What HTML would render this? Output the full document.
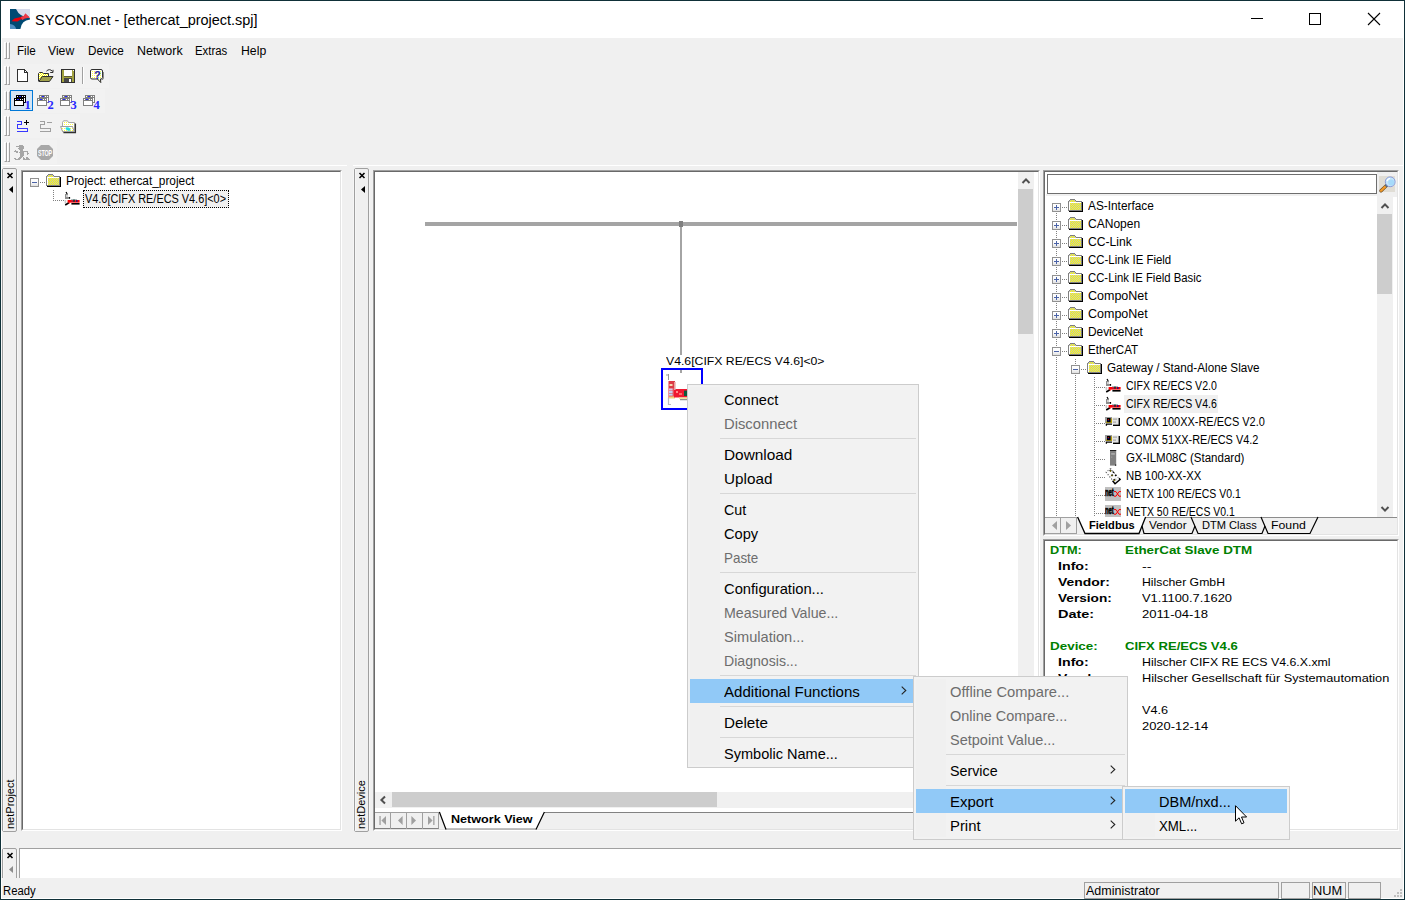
<!DOCTYPE html>
<html lang="en"><head><meta charset="utf-8"><title>SYCON.net - [ethercat_project.spj]</title>
<style>
html,body{margin:0;padding:0;}
body{width:1405px;height:900px;overflow:hidden;background:#f0f0f0;font-family:"Liberation Sans",sans-serif;}
#win{position:absolute;left:0;top:0;width:1405px;height:900px;overflow:hidden;background:#f0f0f0;}
#win div,#win span,#win svg{position:absolute;}
.t{white-space:pre;line-height:1;}
svg{overflow:visible;}
.sunk{border:1px solid;border-color:#a0a0a0 #fff #fff #a0a0a0;box-sizing:border-box;}
.sunk>i{position:absolute;left:0;top:0;right:0;bottom:0;border:1px solid;border-color:#696969 #e3e3e3 #e3e3e3 #696969;background:#fff;display:block;}
.menu{background:#f2f2f2;border:1px solid #ccc;box-sizing:border-box;}
.sep{height:1px;background:#d7d7d7;}
.hl{background:#91c9f7;}

</style></head><body>
<div id="win">
<div style="left:0px;top:0px;width:1405px;height:900px;background:#0f3038;"></div>
<div style="left:1px;top:1px;width:1403px;height:898px;background:#fff;"></div>
<div style="left:2px;top:38px;width:1401px;height:860px;background:#f0f0f0;"></div>
<div style="left:1px;top:1px;width:1403px;height:37px;background:#fff;"></div>
<svg style="left:10px;top:9px" width="20" height="20" viewBox="0 0 20 20">
<rect width="20" height="20" fill="#004a73"/>
<path d="M6 0 Q9.5 8 20 9.2 V0 Z" fill="#d6daea"/>
<path d="M20 10.6 Q11.5 11.6 10.4 20 H20 Z" fill="#fff"/>
<path d="M0 15 Q5 15.6 6.2 20 H0 Z" fill="#4f8fc2"/>
<path d="M1.5 12.2 L4.5 9.6 L11 8 L14.2 6.8 L15.3 4.6 L19.6 8.4 L14.6 9.4 L12.4 10.9 L11.6 10 L7.5 12.6 Z" fill="#e8000a"/>
<path d="M11 8 L14.2 6.8 L15.3 4.6 L19.6 8.4 L14.6 9.4 L12.4 10.9 L11.6 10 Z" fill="#ea3a48"/>
</svg>
<span class="t" id="title" style="left:35.0px;top:11.88px;font-size:15.5px;color:#000;transform-origin:0 50%;transform:scaleX(0.9328);">SYCON.net - [ethercat_project.spj]</span>
<svg style="left:1240px;top:1px" width="160" height="36" viewBox="0 0 160 36" fill="none" stroke="#000" stroke-width="1">
<path d="M11 17.5 H23"/>
<rect x="69.5" y="12.5" width="11" height="11"/>
<path d="M128 12 L140 24 M140 12 L128 24" stroke-width="1.1"/>
</svg>
<div style="left:2px;top:165px;width:1401px;height:1px;background:#fff;"></div>
<div style="left:347px;top:165px;width:6px;height:1px;background:#f0f0f0;"></div>
<span class="t" id="mb0" style="left:16.8px;top:44.84px;font-size:12px;color:#000;transform-origin:0 50%;transform:scaleX(0.9719);">File</span>
<span class="t" id="mb1" style="left:48.4px;top:44.84px;font-size:12px;color:#000;transform-origin:0 50%;transform:scaleX(1.0156);">View</span>
<span class="t" id="mb2" style="left:87.8px;top:44.84px;font-size:12px;color:#000;transform-origin:0 50%;transform:scaleX(0.9758);">Device</span>
<span class="t" id="mb3" style="left:137.0px;top:44.84px;font-size:12px;color:#000;transform-origin:0 50%;transform:scaleX(1.0360);">Network</span>
<span class="t" id="mb4" style="left:195.4px;top:44.84px;font-size:12px;color:#000;transform-origin:0 50%;transform:scaleX(0.9466);">Extras</span>
<span class="t" id="mb5" style="left:241.0px;top:44.84px;font-size:12px;color:#000;transform-origin:0 50%;transform:scaleX(1.0208);">Help</span>
<svg width="0" height="0" style="left:0;top:0"><defs>
<pattern id="dith" width="2" height="2" patternUnits="userSpaceOnUse"><rect width="2" height="2" fill="#ffff00"/><rect width="1" height="1" fill="#fff"/><rect x="1" y="1" width="1" height="1" fill="#fff"/></pattern>
<linearGradient id="pmg" x1="0" y1="0" x2="0" y2="1"><stop offset="0" stop-color="#fff"/><stop offset=".5" stop-color="#fafafa"/><stop offset="1" stop-color="#dcdcdc"/></linearGradient>
<pattern id="dith2" width="2" height="2" patternUnits="userSpaceOnUse"><rect width="2" height="2" fill="#fff"/><rect width="1" height="1" fill="#ffff40"/></pattern>
<pattern id="dith3" width="2" height="2" patternUnits="userSpaceOnUse"><rect width="2" height="2" fill="#ffff00"/><rect x="1" width="1" height="1" fill="#c0c0c0"/><rect y="1" width="1" height="1" fill="#c0c0c0"/></pattern>
</defs></svg>
<div style="left:3px;top:64px;width:106px;height:24px;background:#f2f2f2;"></div>
<div style="left:3px;top:89px;width:102px;height:24px;background:#f2f2f2;"></div>
<div style="left:3px;top:114px;width:77px;height:24px;background:#f2f2f2;"></div>
<div style="left:3px;top:140px;width:54px;height:24px;background:#f2f2f2;"></div>
<svg style="left:17px;top:69px" width="12" height="14" viewBox="0 0 12 14" shape-rendering="crispEdges">
<path d="M0.5 0.5 H7.5 L10.5 3.5 V12.5 H0.5 Z" fill="#fff" stroke="#303030"/>
<path d="M7.5 0.5 V3.5 H10.5" fill="none" stroke="#303030"/>
</svg>
<svg style="left:38px;top:68px" width="16" height="15" viewBox="0 0 16 15">
<path d="M8.4 3.2 Q11.4 0 14.6 3.4 M12.2 4.5 H15 V1.8" fill="none" stroke="#303030" stroke-width="1"/>
<path d="M0.5 13 V5.5 L1.5 4.5 H4.5 L5.5 5.5 H10.5 V8" fill="url(#dith)" stroke="#303030" stroke-width="1"/>
<path d="M1 8 V13 L4 8 Z" fill="url(#dith)"/>
<path d="M0.8 13.5 L4.2 8.5 H15 L11.4 13.5 Z" fill="#a2a24c" stroke="#303030" stroke-width="1"/>
</svg>
<svg style="left:61px;top:69px" width="15" height="15" viewBox="0 0 15 15" shape-rendering="crispEdges">
<rect x="0.5" y="0.5" width="13" height="13" fill="#a2a240" stroke="#303030"/>
<rect x="3" y="1" width="8" height="6" fill="#fff"/><rect x="3" y="7" width="8" height="1" fill="#303030" opacity=".6"/>
<rect x="3" y="9" width="8" height="4" fill="#484848"/><rect x="8" y="10" width="2" height="3" fill="#fff"/>
<rect x="12" y="1" width="1" height="1" fill="#fff"/>
</svg>
<div style="left:82px;top:67px;width:1px;height:17px;background:#a0a0a0;"></div>
<div style="left:83px;top:67px;width:1px;height:17px;background:#fff;"></div>
<svg style="left:90px;top:69px" width="15" height="15" viewBox="0 0 15 15">
<path d="M2 0.5 H11 Q12.5 0.5 12.5 2 V8.5 Q12.5 10 11 10 H10.4 L10.8 13.6 L7.4 10 H2 Q0.5 10 0.5 8.5 V2 Q0.5 0.5 2 0.5 Z" fill="url(#dith2)" stroke="#303030" stroke-width="1"/>
<path d="M13.4 3 V9 Q13.4 10.8 11.6 10.8" fill="none" stroke="#808080" stroke-width="1"/>
</svg>
<span class="t" style="left:94.2px;top:70.4px;font-size:10.5px;font-weight:bold;color:#2626a6;-webkit-text-stroke:0.2px #2626a6;">?</span>
<div style="left:10px;top:90px;width:23px;height:21px;background:#d5e5f4;border:1px solid #0078d7;box-sizing:border-box;"></div>
<svg style="left:14px;top:95px" width="17" height="15" viewBox="0 0 17 15" shape-rendering="crispEdges">
<rect x="2.5" y="0.5" width="9" height="7" fill="#fff" stroke="#000"/><rect x="3" y="1" width="8" height="2" fill="#000"/>
<rect x="5" y="1" width="2" height="1" fill="#2020ff"/><rect x="8" y="1" width="1" height="1" fill="#fff"/><rect x="10" y="1" width="1" height="1" fill="#fff"/><rect x="3" y="1" width="1" height="1" fill="#fff"/>
<rect x="0.5" y="3.5" width="9" height="7" fill="#fff" stroke="#000"/><rect x="1" y="4" width="8" height="2" fill="#000"/>
<rect x="3" y="4" width="2" height="1" fill="#2020ff"/><rect x="6" y="4" width="1" height="1" fill="#fff"/><rect x="8" y="4" width="1" height="1" fill="#fff"/><rect x="1" y="4" width="1" height="1" fill="#fff"/>
</svg><span class="t" style="left:24.6px;top:99.4px;font-size:12.5px;font-weight:bold;color:#2828ff;font-family:'Liberation Serif',serif">1</span>
<svg style="left:37px;top:95px" width="17" height="15" viewBox="0 0 17 15" shape-rendering="crispEdges">
<rect x="2.5" y="0.5" width="9" height="7" fill="#fff" stroke="#808080"/><rect x="3" y="1" width="8" height="2" fill="#808080"/>
<rect x="5" y="1" width="2" height="1" fill="#2020ff"/><rect x="8" y="1" width="1" height="1" fill="#fff"/><rect x="10" y="1" width="1" height="1" fill="#fff"/><rect x="3" y="1" width="1" height="1" fill="#fff"/>
<rect x="0.5" y="3.5" width="9" height="7" fill="#fff" stroke="#808080"/><rect x="1" y="4" width="8" height="2" fill="#808080"/>
<rect x="3" y="4" width="2" height="1" fill="#2020ff"/><rect x="6" y="4" width="1" height="1" fill="#fff"/><rect x="8" y="4" width="1" height="1" fill="#fff"/><rect x="1" y="4" width="1" height="1" fill="#fff"/>
</svg><span class="t" style="left:47.6px;top:99.4px;font-size:12.5px;font-weight:bold;color:#2828ff;font-family:'Liberation Serif',serif">2</span>
<svg style="left:60px;top:95px" width="17" height="15" viewBox="0 0 17 15" shape-rendering="crispEdges">
<rect x="2.5" y="0.5" width="9" height="7" fill="#fff" stroke="#808080"/><rect x="3" y="1" width="8" height="2" fill="#808080"/>
<rect x="5" y="1" width="2" height="1" fill="#2020ff"/><rect x="8" y="1" width="1" height="1" fill="#fff"/><rect x="10" y="1" width="1" height="1" fill="#fff"/><rect x="3" y="1" width="1" height="1" fill="#fff"/>
<rect x="0.5" y="3.5" width="9" height="7" fill="#fff" stroke="#808080"/><rect x="1" y="4" width="8" height="2" fill="#808080"/>
<rect x="3" y="4" width="2" height="1" fill="#2020ff"/><rect x="6" y="4" width="1" height="1" fill="#fff"/><rect x="8" y="4" width="1" height="1" fill="#fff"/><rect x="1" y="4" width="1" height="1" fill="#fff"/>
</svg><span class="t" style="left:70.6px;top:99.4px;font-size:12.5px;font-weight:bold;color:#2828ff;font-family:'Liberation Serif',serif">3</span>
<svg style="left:83px;top:95px" width="17" height="15" viewBox="0 0 17 15" shape-rendering="crispEdges">
<rect x="2.5" y="0.5" width="9" height="7" fill="#fff" stroke="#808080"/><rect x="3" y="1" width="8" height="2" fill="#808080"/>
<rect x="5" y="1" width="2" height="1" fill="#2020ff"/><rect x="8" y="1" width="1" height="1" fill="#fff"/><rect x="10" y="1" width="1" height="1" fill="#fff"/><rect x="3" y="1" width="1" height="1" fill="#fff"/>
<rect x="0.5" y="3.5" width="9" height="7" fill="#fff" stroke="#808080"/><rect x="1" y="4" width="8" height="2" fill="#808080"/>
<rect x="3" y="4" width="2" height="1" fill="#2020ff"/><rect x="6" y="4" width="1" height="1" fill="#fff"/><rect x="8" y="4" width="1" height="1" fill="#fff"/><rect x="1" y="4" width="1" height="1" fill="#fff"/>
</svg><span class="t" style="left:93.6px;top:99.4px;font-size:12.5px;font-weight:bold;color:#2828ff;font-family:'Liberation Serif',serif">4</span>
<svg style="left:17px;top:120px" width="14" height="13" viewBox="0 0 14 13" shape-rendering="crispEdges"><path d="M0 1.5 H4.5 V4.5 H0.5 V8.5 H10.5 V11.5 H0" fill="none" stroke="#3838ff" stroke-width="1"/></svg>
<div style="left:24px;top:122px;width:5px;height:1px;background:#000;"></div>
<div style="left:26px;top:120px;width:1px;height:5px;background:#000;"></div>
<svg style="left:40px;top:120px" width="14" height="13" viewBox="0 0 14 13" shape-rendering="crispEdges"><path d="M0 1.5 H4.5 V4.5 H0.5 V8.5 H10.5 V11.5 H0" fill="none" stroke="#a0a0a0" stroke-width="1"/></svg>
<div style="left:47px;top:122px;width:5px;height:1px;background:#a0a0a0;"></div>
<svg style="left:60px;top:120px" width="17" height="14" viewBox="0 0 17 14">
<path d="M2.5 2.5 L3.5 0.8 H7.5 L8.5 2.5 H14.5 V11.5 H2.5 Z" fill="url(#dith2)" stroke="#a8a8a8" stroke-width="1"/>
<path d="M0.6 6.5 H12.5 L14.2 11.6 H2.6 Z" fill="url(#dith2)" stroke="#a0a0a0" stroke-width="1"/>
<ellipse cx="8" cy="9" rx="2.6" ry="1.5" fill="#20e0e0" transform="rotate(20 8 9)"/>
<path d="M15.4 3.4 V12.6 H3.4" fill="none" stroke="#303030" stroke-width="1.3"/>
</svg>
<svg style="left:14px;top:145px" width="16" height="15" viewBox="0 0 16 15" shape-rendering="crispEdges" fill="#a6a6a6"><rect x="5" y="0" width="4" height="1"/><rect x="2" y="1" width="8" height="1"/><rect x="5" y="2" width="5" height="1"/><rect x="4" y="3" width="6" height="1"/><rect x="5" y="4" width="4" height="1"/><rect x="1" y="5" width="1" height="1"/><rect x="6" y="5" width="3" height="1"/><rect x="0" y="6" width="4" height="1"/><rect x="6" y="6" width="8" height="1"/><rect x="2" y="7" width="2" height="1"/><rect x="5" y="7" width="5" height="1"/><rect x="13" y="7" width="1" height="1"/><rect x="6" y="8" width="4" height="1"/><rect x="13" y="8" width="2" height="1"/><rect x="6" y="9" width="4" height="1"/><rect x="13" y="9" width="1" height="1"/><rect x="6" y="10" width="4" height="1"/><rect x="6" y="11" width="3" height="1"/><rect x="5" y="12" width="3" height="1"/><rect x="9" y="12" width="1" height="1"/><rect x="12" y="12" width="2" height="1"/><rect x="0" y="13" width="2" height="1"/><rect x="4" y="13" width="3" height="1"/><rect x="9" y="13" width="2" height="1"/><rect x="12" y="13" width="3" height="1"/><rect x="1" y="14" width="5" height="1"/><rect x="9" y="14" width="7" height="1"/></svg>
<svg style="left:37px;top:145px" width="16" height="15" viewBox="0 0 16 15"><path d="M4 0 H12 L16 4 V11 L12 15 H4 L0 11 V4 Z" fill="#a8a8a8"/></svg>
<span class="t" style="left:38.3px;top:148.1px;font-size:7px;font-weight:bold;color:#fff;letter-spacing:-0.2px;transform-origin:0 0;transform:scale(.76,1.3)">STOP</span>
<div style="left:4px;top:42px;width:3px;height:17px;border:1px solid;border-color:#fff #a0a0a0 #a0a0a0 #fff;box-sizing:border-box;"></div><div style="left:7px;top:42px;width:3px;height:17px;border:1px solid;border-color:#fff #a0a0a0 #a0a0a0 #fff;box-sizing:border-box;"></div><div style="left:4px;top:66px;width:3px;height:19px;border:1px solid;border-color:#fff #a0a0a0 #a0a0a0 #fff;box-sizing:border-box;"></div><div style="left:7px;top:66px;width:3px;height:19px;border:1px solid;border-color:#fff #a0a0a0 #a0a0a0 #fff;box-sizing:border-box;"></div><div style="left:4px;top:91px;width:3px;height:19px;border:1px solid;border-color:#fff #a0a0a0 #a0a0a0 #fff;box-sizing:border-box;"></div><div style="left:7px;top:91px;width:3px;height:19px;border:1px solid;border-color:#fff #a0a0a0 #a0a0a0 #fff;box-sizing:border-box;"></div><div style="left:4px;top:116px;width:3px;height:20px;border:1px solid;border-color:#fff #a0a0a0 #a0a0a0 #fff;box-sizing:border-box;"></div><div style="left:7px;top:116px;width:3px;height:20px;border:1px solid;border-color:#fff #a0a0a0 #a0a0a0 #fff;box-sizing:border-box;"></div><div style="left:4px;top:142px;width:3px;height:20px;border:1px solid;border-color:#fff #a0a0a0 #a0a0a0 #fff;box-sizing:border-box;"></div><div style="left:7px;top:142px;width:3px;height:20px;border:1px solid;border-color:#fff #a0a0a0 #a0a0a0 #fff;box-sizing:border-box;"></div>
<div style="left:2px;top:168px;width:15px;height:664px;border:1px solid #a0a0a0;border-radius:2px;box-sizing:border-box;"></div><div style="left:1px;top:170px;width:1px;height:660px;background:#f6f6f6;"></div><div style="left:17px;top:170px;width:1px;height:660px;background:#f6f6f6;"></div><div style="left:3px;top:169px;width:1px;height:662px;background:#f6f6f6;"></div><svg style="left:7px;top:173px" width="6" height="5" viewBox="0 0 6 5"><path d="M0.5 0 L5.5 5 M5.5 0 L0.5 5" stroke="#000" stroke-width="1.6"/></svg><svg style="left:9px;top:186px" width="4" height="7" viewBox="0 0 4 7"><path d="M4 0 L4 7 L0 3.5 Z" fill="#000"/></svg>
<div style="left:354px;top:168px;width:15px;height:664px;border:1px solid #a0a0a0;border-radius:2px;box-sizing:border-box;"></div><div style="left:353px;top:170px;width:1px;height:660px;background:#f6f6f6;"></div><div style="left:369px;top:170px;width:1px;height:660px;background:#f6f6f6;"></div><div style="left:355px;top:169px;width:1px;height:662px;background:#f6f6f6;"></div><svg style="left:359px;top:173px" width="6" height="5" viewBox="0 0 6 5"><path d="M0.5 0 L5.5 5 M5.5 0 L0.5 5" stroke="#000" stroke-width="1.6"/></svg><svg style="left:361px;top:186px" width="4" height="7" viewBox="0 0 4 7"><path d="M4 0 L4 7 L0 3.5 Z" fill="#000"/></svg>
<div style="left:0;top:848px;width:20px;height:30px;overflow:hidden"><div style="left:0;top:-848px;width:20px;height:900px"><div style="left:2px;top:848px;width:15px;height:36px;border:1px solid #a0a0a0;border-radius:2px;box-sizing:border-box;"></div><div style="left:1px;top:850px;width:1px;height:32px;background:#f6f6f6;"></div><div style="left:17px;top:850px;width:1px;height:32px;background:#f6f6f6;"></div><div style="left:3px;top:849px;width:1px;height:34px;background:#f6f6f6;"></div><svg style="left:7px;top:853px" width="6" height="5" viewBox="0 0 6 5"><path d="M0.5 0 L5.5 5 M5.5 0 L0.5 5" stroke="#000" stroke-width="1.6"/></svg><svg style="left:9px;top:866px" width="4" height="7" viewBox="0 0 4 7"><path d="M4 0 L4 7 L0 3.5 Z" fill="#8c8c8c"/></svg></div></div>
<span class="t" id="rl1" style="left:5px;top:829px;font-size:11px;transform-origin:0 0;transform:rotate(-90deg);">netProject</span>
<span class="t" id="rl2" style="left:356px;top:829px;font-size:11px;transform-origin:0 0;transform:rotate(-90deg);">netDevice</span>
<div class="sunk" style="left:21px;top:170px;width:321px;height:661px"><i></i></div>
<div class="sunk" style="left:373px;top:170px;width:667px;height:661px"><i></i></div>
<div class="sunk" style="left:1043px;top:170px;width:356px;height:366px"><i></i></div>
<div class="sunk" style="left:1043px;top:539px;width:356px;height:292px"><i></i></div>
<div style="left:19px;top:848px;width:1382px;height:30px;background:#fff;border:1px solid #a0a0a0;border-right:none;border-bottom:none;box-sizing:border-box;"></div>
<span class="t" id="ready" style="left:3.0px;top:884.84px;font-size:12px;color:#000;transform-origin:0 50%;transform:scaleX(0.9398);">Ready</span>
<div style="left:1084px;top:882px;width:195px;height:17px;border:1px solid #a0a0a0;box-sizing:border-box;"></div>
<div style="left:1281px;top:882px;width:29px;height:17px;border:1px solid #a0a0a0;box-sizing:border-box;"></div>
<div style="left:1312px;top:882px;width:34px;height:17px;border:1px solid #a0a0a0;box-sizing:border-box;"></div>
<div style="left:1348px;top:882px;width:33px;height:17px;border:1px solid #a0a0a0;box-sizing:border-box;"></div>
<span class="t" id="admin" style="left:1085.9px;top:884.84px;font-size:12px;color:#000;transform-origin:0 50%;transform:scaleX(1.0426);">Administrator</span>
<span class="t" id="num" style="left:1313.4px;top:884.84px;font-size:12px;color:#000;transform-origin:0 50%;transform:scaleX(1.0685);">NUM</span>
<div style="left:1400px;top:889px;width:2px;height:2px;background:#bfbfbf;"></div>
<div style="left:1397px;top:892px;width:2px;height:2px;background:#bfbfbf;"></div>
<div style="left:1400px;top:892px;width:2px;height:2px;background:#bfbfbf;"></div>
<div style="left:1394px;top:895px;width:2px;height:2px;background:#bfbfbf;"></div>
<div style="left:1397px;top:895px;width:2px;height:2px;background:#bfbfbf;"></div>
<div style="left:1400px;top:895px;width:2px;height:2px;background:#bfbfbf;"></div>
<svg style="left:30px;top:178px" width="9" height="9" viewBox="0 0 9 9" shape-rendering="crispEdges"><rect x="0.5" y="0.5" width="8" height="8" rx="1" fill="url(#pmg)" stroke="#919191"/><rect x="2" y="4" width="5" height="1" fill="#4b63a7"/></svg>
<div style="left:40px;top:182px;width:5px;height:1px;background:repeating-linear-gradient(90deg,#808080 0 1px,transparent 1px 2px)"></div>
<svg style="left:46px;top:174px" width="15" height="13" viewBox="0 0 15 13" shape-rendering="crispEdges">
<rect x="2" y="0" width="5" height="1" fill="#808080"/>
<rect x="1" y="1" width="1" height="1" fill="#808080"/><rect x="7" y="1" width="1" height="1" fill="#808080"/>
<rect x="2" y="1" width="5" height="1" fill="url(#dith3)"/>
<rect x="1" y="2" width="7" height="1" fill="url(#dith3)"/><rect x="8" y="2" width="6" height="1" fill="#808080"/>
<rect x="0" y="2" width="1" height="10" fill="#808080"/>
<rect x="1" y="3" width="12" height="1" fill="#fff"/><rect x="1" y="4" width="1" height="7" fill="#fff"/>
<rect x="2" y="4" width="11" height="7" fill="url(#dith3)"/>
<rect x="13" y="3" width="1" height="9" fill="#808080"/>
<rect x="0" y="11" width="14" height="1" fill="#808080"/>
<rect x="14" y="3" width="1" height="10" fill="#000"/>
<rect x="1" y="12" width="14" height="1" fill="#000"/>
</svg>
<span class="t" id="lt0" style="left:65.8px;top:174.84px;font-size:12px;color:#000;transform-origin:0 50%;transform:scaleX(0.9871);">Project: ethercat_project</span>
<div style="left:53px;top:190px;width:1px;height:11px;background:repeating-linear-gradient(180deg,#808080 0 1px,transparent 1px 2px)"></div>
<div style="left:53px;top:200px;width:11px;height:1px;background:repeating-linear-gradient(90deg,#808080 0 1px,transparent 1px 2px)"></div>
<svg style="left:64px;top:191px" width="16" height="15" viewBox="0 0 16 15">
<path d="M2 1 L3.2 3" stroke="#000" stroke-width="1.2"/>
<rect x="1" y="3" width="3" height="5" fill="#8c8c8c"/><rect x="2" y="4" width="2" height="2" fill="#cfcfcf"/>
<rect x="4.5" y="6" width="1.6" height="1.8" fill="#000"/>
<rect x="0.6" y="9" width="1.6" height="3.4" fill="#c8c8c8"/>
<rect x="3.6" y="9" width="12" height="2.6" fill="#ff0000"/>
<rect x="7" y="8.2" width="6" height="1" fill="#9fb0b0"/>
<rect x="9.2" y="8.6" width="1.6" height="2.2" fill="#0a3a3a"/><rect x="12.2" y="9" width="1.3" height="2" fill="#101090"/>
<rect x="7.6" y="9.4" width="1" height="1.6" fill="#8a1a6a"/>
<rect x="4" y="11.4" width="1.8" height="1.2" fill="#ff0000"/>
<rect x="7.4" y="12" width="8.2" height="1.6" fill="#000"/>
<path d="M1.2 14 L4.6 12" stroke="#000" stroke-width="1.6"/>
</svg>
<div style="left:83px;top:190px;width:146px;height:18px;background:#f0f0f0;border:1px dotted #000;box-sizing:border-box;"></div>
<span class="t" id="lt1" style="left:85.0px;top:192.84px;font-size:12px;color:#000;transform-origin:0 50%;transform:scaleX(0.9072);">V4.6[CIFX RE/ECS V4.6]&lt;0&gt;</span>
<div style="left:425px;top:222px;width:592px;height:4px;background:#a4a4a4;"></div>
<div style="left:680px;top:226px;width:2px;height:147px;background:#a4a4a4;"></div>
<div style="left:679px;top:221px;width:4px;height:6px;background:#7f7f7f;"></div>
<div style="left:664px;top:355px;width:164px;height:13px;background:#fff;"></div>
<span class="t" id="nvlab" style="left:666.1px;top:355.97px;font-size:11.5px;color:#000;transform-origin:0 50%;transform:scaleX(1.0642);">V4.6[CIFX RE/ECS V4.6]&lt;0&gt;</span>
<div style="left:661px;top:368px;width:42px;height:42px;border:2px solid #0000ff;box-sizing:border-box;"></div>
<div style="left:680px;top:370px;width:2px;height:3px;background:#a4a4a4;"></div>
<svg style="left:665px;top:373px" width="36" height="34" viewBox="0 0 36 34">
<path d="M1 2 H3 M3.5 1 V7" stroke="#999" stroke-width="1" fill="none"/>
<rect x="3.4" y="8" width="6.6" height="17" fill="#e4525e"/>
<rect x="4" y="8" width="6" height="7" fill="#dc3a46"/><rect x="4.5" y="11" width="3" height="2" fill="#f6d8b0"/>
<rect x="4" y="15.5" width="3.6" height="2" fill="#d9c8e8"/><rect x="4" y="18" width="3.6" height="2" fill="#c8d0f0"/><rect x="4" y="20.6" width="3.6" height="2" fill="#bcd6f2"/>
<rect x="4" y="23.5" width="6" height="2" fill="#f2d27a"/>
<path d="M9 16 H36 V24.5 H9 Z" fill="#f01830"/>
<rect x="9" y="9" width="1.6" height="8" fill="#e8a0a0"/>
<rect x="19" y="17.6" width="4" height="5.4" fill="#0f5a3c"/>
<rect x="11" y="18" width="2" height="2" fill="#ff8a8a"/><rect x="14" y="20" width="3" height="2" fill="#ff6a6a"/>
<rect x="14" y="24.5" width="22" height="1.6" fill="#f2e6a0"/><rect x="15" y="26.2" width="21" height="1" fill="#777"/>
<path d="M3.5 25 V31.5 H6" stroke="#bbb" stroke-width="1.2" fill="none"/>
</svg>
<div style="left:1018px;top:172px;width:16px;height:620px;background:#f0f0f0;"></div>
<div style="left:1018px;top:189px;width:15px;height:145px;background:#cdcdcd;"></div>
<svg style="left:1022px;top:178px" width="8" height="6" viewBox="0 0 8 6"><path d="M0.5 5 L4 1.4 L7.5 5" fill="none" stroke="#505050" stroke-width="2"/></svg>
<div style="left:375px;top:792px;width:643px;height:16px;background:#f0f0f0;"></div>
<div style="left:392px;top:792px;width:325px;height:15px;background:#cdcdcd;"></div>
<svg style="left:380px;top:796px" width="6" height="8" viewBox="0 0 6 8"><path d="M5 0.5 L1.4 4 L5 7.5" fill="none" stroke="#505050" stroke-width="2"/></svg>
<div style="left:1018px;top:792px;width:16px;height:16px;background:#f0f0f0;"></div>
<div style="left:375px;top:812px;width:663px;height:17px;background:#f0f0f0;"></div>
<div style="left:544px;top:812px;width:494px;height:1px;background:#828282;"></div>
<div style="left:375px;top:812px;width:64px;height:17px;background:#f0f0f0;border:1px solid #a0a0a0;border-left:none;border-bottom-color:#808080;box-sizing:border-box;"></div>
<div style="left:390px;top:812px;width:1px;height:17px;background:#a0a0a0;"></div>
<div style="left:406px;top:812px;width:1px;height:17px;background:#a0a0a0;"></div>
<div style="left:422px;top:812px;width:1px;height:17px;background:#a0a0a0;"></div>
<svg style="left:375px;top:812px" width="64" height="17" viewBox="0 0 64 17" fill="#a0a0a0">
<rect x="4.4" y="4" width="1.3" height="9"/><path d="M11 4 V13 L6.4 8.5Z"/>
<path d="M27.6 4 V13 L23 8.5Z"/>
<path d="M36.4 4 V13 L41 8.5Z"/>
<path d="M53 4 V13 L57.6 8.5Z"/><rect x="58.2" y="4" width="1.3" height="9"/>
</svg>
<svg style="left:439px;top:812px" width="110" height="19" viewBox="0 0 110 19">
<path d="M0.4 0 L7 17.5 H97 L105.4 0 Z" fill="#fff"/>
<path d="M7 17 H97" fill="none" stroke="#808080" stroke-width="1"/>
<path d="M0.4 0 L7 17.5 M97 17.5 L105.4 0" fill="none" stroke="#000" stroke-width="1.2"/>
</svg>
<span class="t" id="nvtab" style="left:451.0px;top:814.07px;font-size:11.5px;color:#000;font-weight:bold;transform-origin:0 50%;transform:scaleX(1.0942);">Network View</span>
<div style="left:1377px;top:172px;width:20px;height:25px;background:#f0f0f0;"></div>
<div style="left:1046px;top:194px;width:351px;height:2px;background:#f0f0f0;"></div>
<div style="left:1047px;top:174px;width:330px;height:20px;background:#fff;border:1px solid #6e6e6e;box-sizing:border-box;"></div>
<div style="left:1379px;top:176px;width:16px;height:16px;background:#e0ddd5;"></div>
<svg style="left:1378.5px;top:175.5px" width="17" height="17" viewBox="0 0 17 17">
<path d="M2 14.8 L7.4 9.6" stroke="#6a4a20" stroke-width="3.4" stroke-linecap="round"/>
<path d="M2 14.8 L6.6 10.4" stroke="#f39a28" stroke-width="2.2" stroke-linecap="round"/>
<path d="M6.6 10.4 L8 9" stroke="#4a6a8a" stroke-width="2.2"/>
<circle cx="11.2" cy="5.8" r="4.9" fill="#c4e6fb" stroke="#8a9ad8" stroke-width="1"/>
<circle cx="12.2" cy="6.6" r="3" fill="#a6dafa"/>
<path d="M8 5 A3.6 3.6 0 0 1 11 2.4" stroke="#fff" stroke-width="1.4" fill="none"/>
</svg>
<div style="left:1045px;top:197px;width:352px;height:320px;overflow:hidden">
<div style="left:-1045px;top:-197px;width:1405px;height:900px">
<div style="left:1056px;top:213px;width:1px;height:305px;background:repeating-linear-gradient(180deg,#808080 0 1px,transparent 1px 2px)"></div>
<div style="left:1075px;top:359px;width:1px;height:159px;background:repeating-linear-gradient(180deg,#808080 0 1px,transparent 1px 2px)"></div>
<div style="left:1094px;top:377px;width:1px;height:141px;background:repeating-linear-gradient(180deg,#808080 0 1px,transparent 1px 2px)"></div>
<svg style="left:1052px;top:203px" width="9" height="9" viewBox="0 0 9 9" shape-rendering="crispEdges"><rect x="0.5" y="0.5" width="8" height="8" rx="1" fill="url(#pmg)" stroke="#919191"/><rect x="2" y="4" width="5" height="1" fill="#4b63a7"/><rect x="4" y="2" width="1" height="5" fill="#4b63a7"/></svg>
<div style="left:1062px;top:207px;width:5px;height:1px;background:repeating-linear-gradient(90deg,#808080 0 1px,transparent 1px 2px)"></div>
<svg style="left:1068px;top:199px" width="15" height="13" viewBox="0 0 15 13" shape-rendering="crispEdges">
<rect x="2" y="0" width="5" height="1" fill="#808080"/>
<rect x="1" y="1" width="1" height="1" fill="#808080"/><rect x="7" y="1" width="1" height="1" fill="#808080"/>
<rect x="2" y="1" width="5" height="1" fill="url(#dith3)"/>
<rect x="1" y="2" width="7" height="1" fill="url(#dith3)"/><rect x="8" y="2" width="6" height="1" fill="#808080"/>
<rect x="0" y="2" width="1" height="10" fill="#808080"/>
<rect x="1" y="3" width="12" height="1" fill="#fff"/><rect x="1" y="4" width="1" height="7" fill="#fff"/>
<rect x="2" y="4" width="11" height="7" fill="url(#dith3)"/>
<rect x="13" y="3" width="1" height="9" fill="#808080"/>
<rect x="0" y="11" width="14" height="1" fill="#808080"/>
<rect x="14" y="3" width="1" height="10" fill="#000"/>
<rect x="1" y="12" width="14" height="1" fill="#000"/>
</svg>
<span class="t" id="rt0" style="left:1087.8px;top:199.84px;font-size:12px;color:#000;transform-origin:0 50%;transform:scaleX(0.9865);">AS-Interface</span>
<svg style="left:1052px;top:221px" width="9" height="9" viewBox="0 0 9 9" shape-rendering="crispEdges"><rect x="0.5" y="0.5" width="8" height="8" rx="1" fill="url(#pmg)" stroke="#919191"/><rect x="2" y="4" width="5" height="1" fill="#4b63a7"/><rect x="4" y="2" width="1" height="5" fill="#4b63a7"/></svg>
<div style="left:1062px;top:225px;width:5px;height:1px;background:repeating-linear-gradient(90deg,#808080 0 1px,transparent 1px 2px)"></div>
<svg style="left:1068px;top:217px" width="15" height="13" viewBox="0 0 15 13" shape-rendering="crispEdges">
<rect x="2" y="0" width="5" height="1" fill="#808080"/>
<rect x="1" y="1" width="1" height="1" fill="#808080"/><rect x="7" y="1" width="1" height="1" fill="#808080"/>
<rect x="2" y="1" width="5" height="1" fill="url(#dith3)"/>
<rect x="1" y="2" width="7" height="1" fill="url(#dith3)"/><rect x="8" y="2" width="6" height="1" fill="#808080"/>
<rect x="0" y="2" width="1" height="10" fill="#808080"/>
<rect x="1" y="3" width="12" height="1" fill="#fff"/><rect x="1" y="4" width="1" height="7" fill="#fff"/>
<rect x="2" y="4" width="11" height="7" fill="url(#dith3)"/>
<rect x="13" y="3" width="1" height="9" fill="#808080"/>
<rect x="0" y="11" width="14" height="1" fill="#808080"/>
<rect x="14" y="3" width="1" height="10" fill="#000"/>
<rect x="1" y="12" width="14" height="1" fill="#000"/>
</svg>
<span class="t" id="rt1" style="left:1087.8px;top:217.84px;font-size:12px;color:#000;transform-origin:0 50%;transform:scaleX(1.0032);">CANopen</span>
<svg style="left:1052px;top:239px" width="9" height="9" viewBox="0 0 9 9" shape-rendering="crispEdges"><rect x="0.5" y="0.5" width="8" height="8" rx="1" fill="url(#pmg)" stroke="#919191"/><rect x="2" y="4" width="5" height="1" fill="#4b63a7"/><rect x="4" y="2" width="1" height="5" fill="#4b63a7"/></svg>
<div style="left:1062px;top:243px;width:5px;height:1px;background:repeating-linear-gradient(90deg,#808080 0 1px,transparent 1px 2px)"></div>
<svg style="left:1068px;top:235px" width="15" height="13" viewBox="0 0 15 13" shape-rendering="crispEdges">
<rect x="2" y="0" width="5" height="1" fill="#808080"/>
<rect x="1" y="1" width="1" height="1" fill="#808080"/><rect x="7" y="1" width="1" height="1" fill="#808080"/>
<rect x="2" y="1" width="5" height="1" fill="url(#dith3)"/>
<rect x="1" y="2" width="7" height="1" fill="url(#dith3)"/><rect x="8" y="2" width="6" height="1" fill="#808080"/>
<rect x="0" y="2" width="1" height="10" fill="#808080"/>
<rect x="1" y="3" width="12" height="1" fill="#fff"/><rect x="1" y="4" width="1" height="7" fill="#fff"/>
<rect x="2" y="4" width="11" height="7" fill="url(#dith3)"/>
<rect x="13" y="3" width="1" height="9" fill="#808080"/>
<rect x="0" y="11" width="14" height="1" fill="#808080"/>
<rect x="14" y="3" width="1" height="10" fill="#000"/>
<rect x="1" y="12" width="14" height="1" fill="#000"/>
</svg>
<span class="t" id="rt2" style="left:1087.8px;top:235.84px;font-size:12px;color:#000;transform-origin:0 50%;transform:scaleX(1.0105);">CC-Link</span>
<svg style="left:1052px;top:257px" width="9" height="9" viewBox="0 0 9 9" shape-rendering="crispEdges"><rect x="0.5" y="0.5" width="8" height="8" rx="1" fill="url(#pmg)" stroke="#919191"/><rect x="2" y="4" width="5" height="1" fill="#4b63a7"/><rect x="4" y="2" width="1" height="5" fill="#4b63a7"/></svg>
<div style="left:1062px;top:261px;width:5px;height:1px;background:repeating-linear-gradient(90deg,#808080 0 1px,transparent 1px 2px)"></div>
<svg style="left:1068px;top:253px" width="15" height="13" viewBox="0 0 15 13" shape-rendering="crispEdges">
<rect x="2" y="0" width="5" height="1" fill="#808080"/>
<rect x="1" y="1" width="1" height="1" fill="#808080"/><rect x="7" y="1" width="1" height="1" fill="#808080"/>
<rect x="2" y="1" width="5" height="1" fill="url(#dith3)"/>
<rect x="1" y="2" width="7" height="1" fill="url(#dith3)"/><rect x="8" y="2" width="6" height="1" fill="#808080"/>
<rect x="0" y="2" width="1" height="10" fill="#808080"/>
<rect x="1" y="3" width="12" height="1" fill="#fff"/><rect x="1" y="4" width="1" height="7" fill="#fff"/>
<rect x="2" y="4" width="11" height="7" fill="url(#dith3)"/>
<rect x="13" y="3" width="1" height="9" fill="#808080"/>
<rect x="0" y="11" width="14" height="1" fill="#808080"/>
<rect x="14" y="3" width="1" height="10" fill="#000"/>
<rect x="1" y="12" width="14" height="1" fill="#000"/>
</svg>
<span class="t" id="rt3" style="left:1087.8px;top:253.84px;font-size:12px;color:#000;transform-origin:0 50%;transform:scaleX(0.9524);">CC-Link IE Field</span>
<svg style="left:1052px;top:275px" width="9" height="9" viewBox="0 0 9 9" shape-rendering="crispEdges"><rect x="0.5" y="0.5" width="8" height="8" rx="1" fill="url(#pmg)" stroke="#919191"/><rect x="2" y="4" width="5" height="1" fill="#4b63a7"/><rect x="4" y="2" width="1" height="5" fill="#4b63a7"/></svg>
<div style="left:1062px;top:279px;width:5px;height:1px;background:repeating-linear-gradient(90deg,#808080 0 1px,transparent 1px 2px)"></div>
<svg style="left:1068px;top:271px" width="15" height="13" viewBox="0 0 15 13" shape-rendering="crispEdges">
<rect x="2" y="0" width="5" height="1" fill="#808080"/>
<rect x="1" y="1" width="1" height="1" fill="#808080"/><rect x="7" y="1" width="1" height="1" fill="#808080"/>
<rect x="2" y="1" width="5" height="1" fill="url(#dith3)"/>
<rect x="1" y="2" width="7" height="1" fill="url(#dith3)"/><rect x="8" y="2" width="6" height="1" fill="#808080"/>
<rect x="0" y="2" width="1" height="10" fill="#808080"/>
<rect x="1" y="3" width="12" height="1" fill="#fff"/><rect x="1" y="4" width="1" height="7" fill="#fff"/>
<rect x="2" y="4" width="11" height="7" fill="url(#dith3)"/>
<rect x="13" y="3" width="1" height="9" fill="#808080"/>
<rect x="0" y="11" width="14" height="1" fill="#808080"/>
<rect x="14" y="3" width="1" height="10" fill="#000"/>
<rect x="1" y="12" width="14" height="1" fill="#000"/>
</svg>
<span class="t" id="rt4" style="left:1087.8px;top:271.84px;font-size:12px;color:#000;transform-origin:0 50%;transform:scaleX(0.9446);">CC-Link IE Field Basic</span>
<svg style="left:1052px;top:293px" width="9" height="9" viewBox="0 0 9 9" shape-rendering="crispEdges"><rect x="0.5" y="0.5" width="8" height="8" rx="1" fill="url(#pmg)" stroke="#919191"/><rect x="2" y="4" width="5" height="1" fill="#4b63a7"/><rect x="4" y="2" width="1" height="5" fill="#4b63a7"/></svg>
<div style="left:1062px;top:297px;width:5px;height:1px;background:repeating-linear-gradient(90deg,#808080 0 1px,transparent 1px 2px)"></div>
<svg style="left:1068px;top:289px" width="15" height="13" viewBox="0 0 15 13" shape-rendering="crispEdges">
<rect x="2" y="0" width="5" height="1" fill="#808080"/>
<rect x="1" y="1" width="1" height="1" fill="#808080"/><rect x="7" y="1" width="1" height="1" fill="#808080"/>
<rect x="2" y="1" width="5" height="1" fill="url(#dith3)"/>
<rect x="1" y="2" width="7" height="1" fill="url(#dith3)"/><rect x="8" y="2" width="6" height="1" fill="#808080"/>
<rect x="0" y="2" width="1" height="10" fill="#808080"/>
<rect x="1" y="3" width="12" height="1" fill="#fff"/><rect x="1" y="4" width="1" height="7" fill="#fff"/>
<rect x="2" y="4" width="11" height="7" fill="url(#dith3)"/>
<rect x="13" y="3" width="1" height="9" fill="#808080"/>
<rect x="0" y="11" width="14" height="1" fill="#808080"/>
<rect x="14" y="3" width="1" height="10" fill="#000"/>
<rect x="1" y="12" width="14" height="1" fill="#000"/>
</svg>
<span class="t" id="rt5" style="left:1087.8px;top:289.84px;font-size:12px;color:#000;transform-origin:0 50%;transform:scaleX(1.0425);">CompoNet</span>
<svg style="left:1052px;top:311px" width="9" height="9" viewBox="0 0 9 9" shape-rendering="crispEdges"><rect x="0.5" y="0.5" width="8" height="8" rx="1" fill="url(#pmg)" stroke="#919191"/><rect x="2" y="4" width="5" height="1" fill="#4b63a7"/><rect x="4" y="2" width="1" height="5" fill="#4b63a7"/></svg>
<div style="left:1062px;top:315px;width:5px;height:1px;background:repeating-linear-gradient(90deg,#808080 0 1px,transparent 1px 2px)"></div>
<svg style="left:1068px;top:307px" width="15" height="13" viewBox="0 0 15 13" shape-rendering="crispEdges">
<rect x="2" y="0" width="5" height="1" fill="#808080"/>
<rect x="1" y="1" width="1" height="1" fill="#808080"/><rect x="7" y="1" width="1" height="1" fill="#808080"/>
<rect x="2" y="1" width="5" height="1" fill="url(#dith3)"/>
<rect x="1" y="2" width="7" height="1" fill="url(#dith3)"/><rect x="8" y="2" width="6" height="1" fill="#808080"/>
<rect x="0" y="2" width="1" height="10" fill="#808080"/>
<rect x="1" y="3" width="12" height="1" fill="#fff"/><rect x="1" y="4" width="1" height="7" fill="#fff"/>
<rect x="2" y="4" width="11" height="7" fill="url(#dith3)"/>
<rect x="13" y="3" width="1" height="9" fill="#808080"/>
<rect x="0" y="11" width="14" height="1" fill="#808080"/>
<rect x="14" y="3" width="1" height="10" fill="#000"/>
<rect x="1" y="12" width="14" height="1" fill="#000"/>
</svg>
<span class="t" id="rt6" style="left:1087.8px;top:307.84px;font-size:12px;color:#000;transform-origin:0 50%;transform:scaleX(1.0425);">CompoNet</span>
<svg style="left:1052px;top:329px" width="9" height="9" viewBox="0 0 9 9" shape-rendering="crispEdges"><rect x="0.5" y="0.5" width="8" height="8" rx="1" fill="url(#pmg)" stroke="#919191"/><rect x="2" y="4" width="5" height="1" fill="#4b63a7"/><rect x="4" y="2" width="1" height="5" fill="#4b63a7"/></svg>
<div style="left:1062px;top:333px;width:5px;height:1px;background:repeating-linear-gradient(90deg,#808080 0 1px,transparent 1px 2px)"></div>
<svg style="left:1068px;top:325px" width="15" height="13" viewBox="0 0 15 13" shape-rendering="crispEdges">
<rect x="2" y="0" width="5" height="1" fill="#808080"/>
<rect x="1" y="1" width="1" height="1" fill="#808080"/><rect x="7" y="1" width="1" height="1" fill="#808080"/>
<rect x="2" y="1" width="5" height="1" fill="url(#dith3)"/>
<rect x="1" y="2" width="7" height="1" fill="url(#dith3)"/><rect x="8" y="2" width="6" height="1" fill="#808080"/>
<rect x="0" y="2" width="1" height="10" fill="#808080"/>
<rect x="1" y="3" width="12" height="1" fill="#fff"/><rect x="1" y="4" width="1" height="7" fill="#fff"/>
<rect x="2" y="4" width="11" height="7" fill="url(#dith3)"/>
<rect x="13" y="3" width="1" height="9" fill="#808080"/>
<rect x="0" y="11" width="14" height="1" fill="#808080"/>
<rect x="14" y="3" width="1" height="10" fill="#000"/>
<rect x="1" y="12" width="14" height="1" fill="#000"/>
</svg>
<span class="t" id="rt7" style="left:1087.8px;top:325.84px;font-size:12px;color:#000;transform-origin:0 50%;transform:scaleX(0.9899);">DeviceNet</span>
<svg style="left:1052px;top:347px" width="9" height="9" viewBox="0 0 9 9" shape-rendering="crispEdges"><rect x="0.5" y="0.5" width="8" height="8" rx="1" fill="url(#pmg)" stroke="#919191"/><rect x="2" y="4" width="5" height="1" fill="#4b63a7"/></svg>
<div style="left:1062px;top:351px;width:5px;height:1px;background:repeating-linear-gradient(90deg,#808080 0 1px,transparent 1px 2px)"></div>
<svg style="left:1068px;top:343px" width="15" height="13" viewBox="0 0 15 13" shape-rendering="crispEdges">
<rect x="2" y="0" width="5" height="1" fill="#808080"/>
<rect x="1" y="1" width="1" height="1" fill="#808080"/><rect x="7" y="1" width="1" height="1" fill="#808080"/>
<rect x="2" y="1" width="5" height="1" fill="url(#dith3)"/>
<rect x="1" y="2" width="7" height="1" fill="url(#dith3)"/><rect x="8" y="2" width="6" height="1" fill="#808080"/>
<rect x="0" y="2" width="1" height="10" fill="#808080"/>
<rect x="1" y="3" width="12" height="1" fill="#fff"/><rect x="1" y="4" width="1" height="7" fill="#fff"/>
<rect x="2" y="4" width="11" height="7" fill="url(#dith3)"/>
<rect x="13" y="3" width="1" height="9" fill="#808080"/>
<rect x="0" y="11" width="14" height="1" fill="#808080"/>
<rect x="14" y="3" width="1" height="10" fill="#000"/>
<rect x="1" y="12" width="14" height="1" fill="#000"/>
</svg>
<span class="t" id="rt8" style="left:1087.8px;top:343.84px;font-size:12px;color:#000;transform-origin:0 50%;transform:scaleX(0.9692);">EtherCAT</span>
<svg style="left:1071px;top:365px" width="9" height="9" viewBox="0 0 9 9" shape-rendering="crispEdges"><rect x="0.5" y="0.5" width="8" height="8" rx="1" fill="url(#pmg)" stroke="#919191"/><rect x="2" y="4" width="5" height="1" fill="#4b63a7"/></svg>
<div style="left:1081px;top:369px;width:5px;height:1px;background:repeating-linear-gradient(90deg,#808080 0 1px,transparent 1px 2px)"></div>
<svg style="left:1087px;top:361px" width="15" height="13" viewBox="0 0 15 13" shape-rendering="crispEdges">
<rect x="2" y="0" width="5" height="1" fill="#808080"/>
<rect x="1" y="1" width="1" height="1" fill="#808080"/><rect x="7" y="1" width="1" height="1" fill="#808080"/>
<rect x="2" y="1" width="5" height="1" fill="url(#dith3)"/>
<rect x="1" y="2" width="7" height="1" fill="url(#dith3)"/><rect x="8" y="2" width="6" height="1" fill="#808080"/>
<rect x="0" y="2" width="1" height="10" fill="#808080"/>
<rect x="1" y="3" width="12" height="1" fill="#fff"/><rect x="1" y="4" width="1" height="7" fill="#fff"/>
<rect x="2" y="4" width="11" height="7" fill="url(#dith3)"/>
<rect x="13" y="3" width="1" height="9" fill="#808080"/>
<rect x="0" y="11" width="14" height="1" fill="#808080"/>
<rect x="14" y="3" width="1" height="10" fill="#000"/>
<rect x="1" y="12" width="14" height="1" fill="#000"/>
</svg>
<span class="t" id="rt9" style="left:1107.0px;top:361.84px;font-size:12px;color:#000;transform-origin:0 50%;transform:scaleX(0.9734);">Gateway / Stand-Alone Slave</span>
<div style="left:1096px;top:387px;width:9px;height:1px;background:repeating-linear-gradient(90deg,#808080 0 1px,transparent 1px 2px)"></div>
<svg style="left:1105px;top:378px" width="16" height="15" viewBox="0 0 16 15">
<path d="M2 1 L3.2 3" stroke="#000" stroke-width="1.2"/>
<rect x="1" y="3" width="3" height="5" fill="#8c8c8c"/><rect x="2" y="4" width="2" height="2" fill="#cfcfcf"/>
<rect x="4.5" y="6" width="1.6" height="1.8" fill="#000"/>
<rect x="0.6" y="9" width="1.6" height="3.4" fill="#c8c8c8"/>
<rect x="3.6" y="9" width="12" height="2.6" fill="#ff0000"/>
<rect x="7" y="8.2" width="6" height="1" fill="#9fb0b0"/>
<rect x="9.2" y="8.6" width="1.6" height="2.2" fill="#0a3a3a"/><rect x="12.2" y="9" width="1.3" height="2" fill="#101090"/>
<rect x="7.6" y="9.4" width="1" height="1.6" fill="#8a1a6a"/>
<rect x="4" y="11.4" width="1.8" height="1.2" fill="#ff0000"/>
<rect x="7.4" y="12" width="8.2" height="1.6" fill="#000"/>
<path d="M1.2 14 L4.6 12" stroke="#000" stroke-width="1.6"/>
</svg>
<span class="t" id="rt10" style="left:1125.8px;top:379.84px;font-size:12px;color:#000;transform-origin:0 50%;transform:scaleX(0.8784);">CIFX RE/ECS V2.0</span>
<div style="left:1096px;top:405px;width:9px;height:1px;background:repeating-linear-gradient(90deg,#808080 0 1px,transparent 1px 2px)"></div>
<svg style="left:1105px;top:396px" width="16" height="15" viewBox="0 0 16 15">
<path d="M2 1 L3.2 3" stroke="#000" stroke-width="1.2"/>
<rect x="1" y="3" width="3" height="5" fill="#8c8c8c"/><rect x="2" y="4" width="2" height="2" fill="#cfcfcf"/>
<rect x="4.5" y="6" width="1.6" height="1.8" fill="#000"/>
<rect x="0.6" y="9" width="1.6" height="3.4" fill="#c8c8c8"/>
<rect x="3.6" y="9" width="12" height="2.6" fill="#ff0000"/>
<rect x="7" y="8.2" width="6" height="1" fill="#9fb0b0"/>
<rect x="9.2" y="8.6" width="1.6" height="2.2" fill="#0a3a3a"/><rect x="12.2" y="9" width="1.3" height="2" fill="#101090"/>
<rect x="7.6" y="9.4" width="1" height="1.6" fill="#8a1a6a"/>
<rect x="4" y="11.4" width="1.8" height="1.2" fill="#ff0000"/>
<rect x="7.4" y="12" width="8.2" height="1.6" fill="#000"/>
<path d="M1.2 14 L4.6 12" stroke="#000" stroke-width="1.6"/>
</svg>
<div style="left:1124px;top:395px;width:94px;height:18px;background:#f0f0f0;"></div>
<span class="t" id="rt11" style="left:1125.8px;top:397.84px;font-size:12px;color:#000;transform-origin:0 50%;transform:scaleX(0.8784);">CIFX RE/ECS V4.6</span>
<div style="left:1096px;top:423px;width:9px;height:1px;background:repeating-linear-gradient(90deg,#808080 0 1px,transparent 1px 2px)"></div>
<svg style="left:1105px;top:417px" width="16" height="10" viewBox="0 0 16 10">
<rect x="0" y="0" width="7" height="6" fill="#9a9a9a"/>
<rect x="1" y="4.5" width="6" height="1.3" fill="#b8a000"/><rect x="6" y="1.5" width="1.2" height="4" fill="#b8a000"/>
<rect x="2" y="1" width="3.6" height="4.2" fill="#000"/>
<rect x="2.8" y="2" width="1" height="1" fill="#e00000"/><rect x="2.8" y="3.2" width="1" height="1" fill="#0000c0"/>
<rect x="7.4" y="0.5" width="7" height="7" fill="#e4e4e4"/>
<rect x="8" y="1.6" width="4" height="1" fill="#9c9c9c"/><rect x="8" y="4.6" width="3" height="1" fill="#9c9c9c"/>
<rect x="13.6" y="1" width="1.4" height="8" fill="#000"/>
<rect x="8" y="7.6" width="7" height="1.4" fill="#000"/>
<path d="M1.4 8.8 V7.2 H7" fill="none" stroke="#000" stroke-width="1.3"/>
</svg>
<span class="t" id="rt12" style="left:1125.8px;top:415.84px;font-size:12px;color:#000;transform-origin:0 50%;transform:scaleX(0.9128);">COMX 100XX-RE/ECS V2.0</span>
<div style="left:1096px;top:441px;width:9px;height:1px;background:repeating-linear-gradient(90deg,#808080 0 1px,transparent 1px 2px)"></div>
<svg style="left:1105px;top:435px" width="16" height="10" viewBox="0 0 16 10">
<rect x="0" y="0" width="7" height="6" fill="#9a9a9a"/>
<rect x="1" y="4.5" width="6" height="1.3" fill="#b8a000"/><rect x="6" y="1.5" width="1.2" height="4" fill="#b8a000"/>
<rect x="2" y="1" width="3.6" height="4.2" fill="#000"/>
<rect x="2.8" y="2" width="1" height="1" fill="#e00000"/><rect x="2.8" y="3.2" width="1" height="1" fill="#0000c0"/>
<rect x="7.4" y="0.5" width="7" height="7" fill="#e4e4e4"/>
<rect x="8" y="1.6" width="4" height="1" fill="#9c9c9c"/><rect x="8" y="4.6" width="3" height="1" fill="#9c9c9c"/>
<rect x="13.6" y="1" width="1.4" height="8" fill="#000"/>
<rect x="8" y="7.6" width="7" height="1.4" fill="#000"/>
<path d="M1.4 8.8 V7.2 H7" fill="none" stroke="#000" stroke-width="1.3"/>
</svg>
<span class="t" id="rt13" style="left:1125.8px;top:433.84px;font-size:12px;color:#000;transform-origin:0 50%;transform:scaleX(0.9107);">COMX 51XX-RE/ECS V4.2</span>
<div style="left:1096px;top:459px;width:9px;height:1px;background:repeating-linear-gradient(90deg,#808080 0 1px,transparent 1px 2px)"></div>
<svg style="left:1110px;top:450px" width="7" height="16" viewBox="0 0 7 16">
<rect x="0" y="0" width="6.2" height="15.6" fill="#808080"/>
<rect x="0" y="0" width="6.2" height="1" fill="#202020"/>
<rect x="1.2" y="3" width="3.6" height="1.8" fill="#a8a8a8"/><rect x="1.2" y="6.6" width="1" height="1" fill="#a8a8a8"/>
<rect x="5" y="14.6" width="1.2" height="1" fill="#000"/>
</svg>
<span class="t" id="rt14" style="left:1125.8px;top:451.84px;font-size:12px;color:#000;transform-origin:0 50%;transform:scaleX(0.9596);">GX-ILM08C (Standard)</span>
<div style="left:1096px;top:477px;width:9px;height:1px;background:repeating-linear-gradient(90deg,#808080 0 1px,transparent 1px 2px)"></div>
<svg style="left:1105px;top:468px" width="16" height="16" viewBox="0 0 16 16">
<g transform="rotate(50 8 8)">
<rect x="0.6" y="5" width="14" height="6" fill="#fbfbfb"/>
<path d="M0.6 11 H11" stroke="#303030" stroke-width="1" stroke-dasharray="1 1.8" fill="none"/>
<path d="M0.6 5 H13.4" stroke="#606060" stroke-width="1" stroke-dasharray="1 1.8" fill="none"/><path d="M0.6 5 V11" stroke="#606060" stroke-width="1" stroke-dasharray="1 1.8" fill="none"/>
<path d="M11.4 11.4 H15.2 V4.8 H13.6" fill="none" stroke="#000" stroke-width="1.5"/>
<rect x="11" y="7" width="2.6" height="2.4" fill="#dcdcdc"/>
<rect x="1.4" y="5.6" width="1.8" height="1.8" fill="#000"/><rect x="6" y="7.4" width="1.8" height="1.8" fill="#000"/><rect x="11" y="8.6" width="1.8" height="1.8" fill="#000"/><rect x="4.6" y="4.6" width="1.6" height="1.4" fill="#000"/><rect x="8.4" y="4.8" width="1.6" height="1.4" fill="#000"/>
<rect x="2" y="6.2" width="1" height="1" fill="#c8b400"/><rect x="6.6" y="8" width="1" height="1" fill="#c8b400"/><rect x="11.6" y="9.2" width="1" height="1" fill="#c8b400"/>
</g></svg>
<span class="t" id="rt15" style="left:1125.8px;top:469.84px;font-size:12px;color:#000;transform-origin:0 50%;transform:scaleX(0.9419);">NB 100-XX-XX</span>
<div style="left:1096px;top:495px;width:9px;height:1px;background:repeating-linear-gradient(90deg,#808080 0 1px,transparent 1px 2px)"></div>
<div style="left:1105px;top:487px;width:16px;height:14px;background:#c0c0c0;overflow:hidden"><span class="t" style="left:0.3px;top:0.4px;font-size:11.5px;font-weight:bold;letter-spacing:-0.2px;transform-origin:0 0;transform:scaleX(.52);color:#000;-webkit-text-stroke:0.6px #000;-webkit-font-smoothing:none">net</span><svg style="left:9px;top:4.4px" width="7" height="6" viewBox="0 0 7 6"><path d="M0 0.6 H2 L5 5.2 H7 M0 5.2 H2 L5 0.6 H7" stroke="#ff0000" stroke-width="1" fill="none"/></svg></div>
<span class="t" id="rt16" style="left:1125.8px;top:487.84px;font-size:12px;color:#000;transform-origin:0 50%;transform:scaleX(0.8737);">NETX 100 RE/ECS V0.1</span>
<div style="left:1096px;top:513px;width:9px;height:1px;background:repeating-linear-gradient(90deg,#808080 0 1px,transparent 1px 2px)"></div>
<div style="left:1105px;top:505px;width:16px;height:14px;background:#c0c0c0;overflow:hidden"><span class="t" style="left:0.3px;top:0.4px;font-size:11.5px;font-weight:bold;letter-spacing:-0.2px;transform-origin:0 0;transform:scaleX(.52);color:#000;-webkit-text-stroke:0.6px #000;-webkit-font-smoothing:none">net</span><svg style="left:9px;top:4.4px" width="7" height="6" viewBox="0 0 7 6"><path d="M0 0.6 H2 L5 5.2 H7 M0 5.2 H2 L5 0.6 H7" stroke="#ff0000" stroke-width="1" fill="none"/></svg></div>
<span class="t" id="rt17" style="left:1125.8px;top:505.84px;font-size:12px;color:#000;transform-origin:0 50%;transform:scaleX(0.8724);">NETX 50 RE/ECS V0.1</span>
</div></div>
<div style="left:1377px;top:197px;width:16px;height:320px;background:#f0f0f0;"></div>
<div style="left:1377px;top:214px;width:15px;height:80px;background:#cdcdcd;"></div>
<svg style="left:1381px;top:203px" width="8" height="6" viewBox="0 0 8 6"><path d="M0.5 5 L4 1.4 L7.5 5" fill="none" stroke="#505050" stroke-width="2"/></svg>
<svg style="left:1380.6px;top:506px" width="8" height="6" viewBox="0 0 8 6"><path d="M0.5 1 L4 4.6 L7.5 1" fill="none" stroke="#505050" stroke-width="2"/></svg>
<div style="left:1045px;top:517px;width:352px;height:17px;background:#f0f0f0;"></div>
<div style="left:1045px;top:517px;width:352px;height:1px;background:#8c8c8c;"></div>
<div style="left:1045px;top:517px;width:32px;height:17px;background:#f0f0f0;border:1px solid #a0a0a0;border-left:none;box-sizing:border-box;"></div>
<div style="left:1060px;top:517px;width:1px;height:17px;background:#a0a0a0;"></div>
<svg style="left:1045px;top:517px" width="32" height="17" viewBox="0 0 32 17" fill="#a0a0a0">
<path d="M12 4 V13 L7 8.5Z"/><path d="M21 4 V13 L26 8.5Z"/></svg>
<svg style="left:1077px;top:517px" width="245" height="19" viewBox="0 0 245 19" fill="none" stroke="#000" stroke-width="1.2">
<path d="M0.6 0 L8 16.5 H62 L68.6 0 Z" fill="#fff" stroke="none"/><path d="M0.6 0 L8 16.5 H62 L68.6 0" stroke-width="1.3"/>
<path d="M65 9 L67 16.5 H115 L118 9"/>
<path d="M114 0 L121 16.5 H185 L188 9"/>
<path d="M184 0 L191 16.5 H233 L241 0"/>
</svg>
<span class="t" id="ct0" style="left:1089.0px;top:519.67px;font-size:11.5px;color:#000;font-weight:bold;transform-origin:0 50%;transform:scaleX(0.9644);">Fieldbus</span>
<span class="t" id="ct1" style="left:1149.0px;top:519.67px;font-size:11.5px;color:#000;transform-origin:0 50%;transform:scaleX(1.0315);">Vendor</span>
<span class="t" id="ct2" style="left:1201.8px;top:519.67px;font-size:11.5px;color:#000;transform-origin:0 50%;transform:scaleX(0.9635);">DTM Class</span>
<span class="t" id="ct3" style="left:1271.4px;top:519.67px;font-size:11.5px;color:#000;transform-origin:0 50%;transform:scaleX(1.0672);">Found</span>
<span class="t" id="i0a" style="left:1049.8px;top:544.67px;font-size:11.5px;color:#008000;font-weight:bold;transform-origin:0 50%;transform:scaleX(1.1061);">DTM:</span>
<span class="t" id="i0b" style="left:1124.8px;top:544.67px;font-size:11.5px;color:#008000;font-weight:bold;transform-origin:0 50%;transform:scaleX(1.1640);">EtherCat Slave DTM</span>
<span class="t" id="i1a" style="left:1057.8px;top:560.67px;font-size:11.5px;color:#000;font-weight:bold;transform-origin:0 50%;transform:scaleX(1.2366);">Info:</span>
<span class="t" id="i1b" style="left:1142.0px;top:560.67px;font-size:11.5px;color:#000;transform-origin:0 50%;transform:scaleX(1.2513);">--</span>
<span class="t" id="i2a" style="left:1057.8px;top:576.67px;font-size:11.5px;color:#000;font-weight:bold;transform-origin:0 50%;transform:scaleX(1.2099);">Vendor:</span>
<span class="t" id="i2b" style="left:1142.0px;top:576.67px;font-size:11.5px;color:#000;transform-origin:0 50%;transform:scaleX(1.0645);">Hilscher GmbH</span>
<span class="t" id="i3a" style="left:1057.8px;top:592.67px;font-size:11.5px;color:#000;font-weight:bold;transform-origin:0 50%;transform:scaleX(1.1853);">Version:</span>
<span class="t" id="i3b" style="left:1142.0px;top:592.67px;font-size:11.5px;color:#000;transform-origin:0 50%;transform:scaleX(1.1198);">V1.1100.7.1620</span>
<span class="t" id="i4a" style="left:1057.8px;top:608.67px;font-size:11.5px;color:#000;font-weight:bold;transform-origin:0 50%;transform:scaleX(1.2584);">Date:</span>
<span class="t" id="i4b" style="left:1142.0px;top:608.67px;font-size:11.5px;color:#000;transform-origin:0 50%;transform:scaleX(1.1382);">2011-04-18</span>
<span class="t" id="i5a" style="left:1049.8px;top:640.67px;font-size:11.5px;color:#008000;font-weight:bold;transform-origin:0 50%;transform:scaleX(1.1681);">Device:</span>
<span class="t" id="i5b" style="left:1124.8px;top:640.67px;font-size:11.5px;color:#008000;font-weight:bold;transform-origin:0 50%;transform:scaleX(1.1387);">CIFX RE/ECS V4.6</span>
<span class="t" id="i6a" style="left:1057.8px;top:656.67px;font-size:11.5px;color:#000;font-weight:bold;transform-origin:0 50%;transform:scaleX(1.2366);">Info:</span>
<span class="t" id="i6b" style="left:1142.0px;top:656.67px;font-size:11.5px;color:#000;transform-origin:0 50%;transform:scaleX(1.0732);">Hilscher CIFX RE ECS V4.6.X.xml</span>
<span class="t" id="i7a" style="left:1057.8px;top:672.67px;font-size:11.5px;color:#000;font-weight:bold;transform-origin:0 50%;transform:scaleX(1.2099);">Vendor:</span>
<span class="t" id="i7b" style="left:1142.0px;top:672.67px;font-size:11.5px;color:#000;transform-origin:0 50%;transform:scaleX(1.1087);">Hilscher Gesellschaft für Systemautomation</span>
<span class="t" id="i8a" style="left:1057.8px;top:704.67px;font-size:11.5px;color:#000;font-weight:bold;transform-origin:0 50%;transform:scaleX(1.1853);">Version:</span>
<span class="t" id="i8b" style="left:1142.0px;top:704.67px;font-size:11.5px;color:#000;transform-origin:0 50%;transform:scaleX(1.1026);">V4.6</span>
<span class="t" id="i9a" style="left:1057.8px;top:720.67px;font-size:11.5px;color:#000;font-weight:bold;transform-origin:0 50%;transform:scaleX(1.2584);">Date:</span>
<span class="t" id="i9b" style="left:1142.0px;top:720.67px;font-size:11.5px;color:#000;transform-origin:0 50%;transform:scaleX(1.1236);">2020-12-14</span>
<div class="menu" style="left:687px;top:384px;width:232px;height:384px"></div><div style="left:690px;top:387px;width:30px;height:378px;background:#f0f0f0;"></div><span class="t" id="m1_0" style="left:724.2px;top:392.30px;font-size:15px;color:#000;transform-origin:0 50%;transform:scaleX(0.9700);">Connect</span><span class="t" id="m1_1" style="left:724.2px;top:416.30px;font-size:15px;color:#6d6d6d;transform-origin:0 50%;transform:scaleX(0.9851);">Disconnect</span><div style="left:720px;top:438px;width:196px;height:1px;background:#d7d7d7;"></div><span class="t" id="m1_3" style="left:724.2px;top:447.30px;font-size:15px;color:#000;transform-origin:0 50%;transform:scaleX(1.0252);">Download</span><span class="t" id="m1_4" style="left:724.2px;top:471.30px;font-size:15px;color:#000;transform-origin:0 50%;transform:scaleX(1.0179);">Upload</span><div style="left:720px;top:493px;width:196px;height:1px;background:#d7d7d7;"></div><span class="t" id="m1_6" style="left:724.2px;top:502.30px;font-size:15px;color:#000;transform-origin:0 50%;transform:scaleX(0.9510);">Cut</span><span class="t" id="m1_7" style="left:724.2px;top:526.30px;font-size:15px;color:#000;transform-origin:0 50%;transform:scaleX(0.9763);">Copy</span><span class="t" id="m1_8" style="left:724.2px;top:550.30px;font-size:15px;color:#6d6d6d;transform-origin:0 50%;transform:scaleX(0.8942);">Paste</span><div style="left:720px;top:572px;width:196px;height:1px;background:#d7d7d7;"></div><span class="t" id="m1_10" style="left:724.2px;top:581.30px;font-size:15px;color:#000;transform-origin:0 50%;transform:scaleX(0.9820);">Configuration...</span><span class="t" id="m1_11" style="left:724.2px;top:605.30px;font-size:15px;color:#6d6d6d;transform-origin:0 50%;transform:scaleX(0.9476);">Measured Value...</span><span class="t" id="m1_12" style="left:724.2px;top:629.30px;font-size:15px;color:#6d6d6d;transform-origin:0 50%;transform:scaleX(0.9740);">Simulation...</span><span class="t" id="m1_13" style="left:724.2px;top:653.30px;font-size:15px;color:#6d6d6d;transform-origin:0 50%;transform:scaleX(0.9404);">Diagnosis...</span><div style="left:720px;top:675px;width:196px;height:1px;background:#d7d7d7;"></div><div style="left:690px;top:679px;width:226px;height:24px;background:#91c9f7;"></div><span class="t" id="m1_15" style="left:724.2px;top:684.30px;font-size:15px;color:#000;transform-origin:0 50%;transform:scaleX(1.0060);">Additional Functions</span><svg style="left:901px;top:686px" width="6" height="9" viewBox="0 0 6 9"><path d="M0.7 0.6 L4.8 4.5 L0.7 8.4" fill="none" stroke="#222" stroke-width="1.1"/></svg><div style="left:720px;top:706px;width:196px;height:1px;background:#d7d7d7;"></div><span class="t" id="m1_17" style="left:724.2px;top:715.30px;font-size:15px;color:#000;transform-origin:0 50%;transform:scaleX(1.0125);">Delete</span><div style="left:720px;top:737px;width:196px;height:1px;background:#d7d7d7;"></div><span class="t" id="m1_19" style="left:724.2px;top:746.30px;font-size:15px;color:#000;transform-origin:0 50%;transform:scaleX(0.9690);">Symbolic Name...</span>
<div class="menu" style="left:913px;top:676px;width:215px;height:164px"></div><div style="left:916px;top:679px;width:30px;height:158px;background:#f0f0f0;"></div><span class="t" id="m2_0" style="left:949.8px;top:684.30px;font-size:15px;color:#6d6d6d;transform-origin:0 50%;transform:scaleX(0.9823);">Offline Compare...</span><span class="t" id="m2_1" style="left:949.8px;top:708.30px;font-size:15px;color:#6d6d6d;transform-origin:0 50%;transform:scaleX(0.9636);">Online Compare...</span><span class="t" id="m2_2" style="left:949.8px;top:732.30px;font-size:15px;color:#6d6d6d;transform-origin:0 50%;transform:scaleX(0.9672);">Setpoint Value...</span><div style="left:946px;top:754px;width:179px;height:1px;background:#d7d7d7;"></div><span class="t" id="m2_4" style="left:949.8px;top:763.30px;font-size:15px;color:#000;transform-origin:0 50%;transform:scaleX(0.9514);">Service</span><svg style="left:1110px;top:765px" width="6" height="9" viewBox="0 0 6 9"><path d="M0.7 0.6 L4.8 4.5 L0.7 8.4" fill="none" stroke="#222" stroke-width="1.1"/></svg><div style="left:946px;top:785px;width:179px;height:1px;background:#d7d7d7;"></div><div style="left:916px;top:789px;width:209px;height:24px;background:#91c9f7;"></div><span class="t" id="m2_6" style="left:949.8px;top:794.30px;font-size:15px;color:#000;transform-origin:0 50%;transform:scaleX(0.9986);">Export</span><svg style="left:1110px;top:796px" width="6" height="9" viewBox="0 0 6 9"><path d="M0.7 0.6 L4.8 4.5 L0.7 8.4" fill="none" stroke="#222" stroke-width="1.1"/></svg><span class="t" id="m2_7" style="left:949.8px;top:818.30px;font-size:15px;color:#000;transform-origin:0 50%;transform:scaleX(0.9889);">Print</span><svg style="left:1110px;top:820px" width="6" height="9" viewBox="0 0 6 9"><path d="M0.7 0.6 L4.8 4.5 L0.7 8.4" fill="none" stroke="#222" stroke-width="1.1"/></svg>
<div class="menu" style="left:1122px;top:786px;width:168px;height:54px"></div><div style="left:1125px;top:789px;width:30px;height:48px;background:#f0f0f0;"></div><div style="left:1125px;top:789px;width:162px;height:24px;background:#91c9f7;"></div><span class="t" id="m3_0" style="left:1159.0px;top:794.30px;font-size:15px;color:#000;transform-origin:0 50%;transform:scaleX(0.9678);">DBM/nxd...</span><span class="t" id="m3_1" style="left:1159.0px;top:818.30px;font-size:15px;color:#000;transform-origin:0 50%;transform:scaleX(0.8833);">XML...</span>
<svg style="left:1235px;top:805px" width="13" height="20" viewBox="0 0 13 20">
<path d="M0.5 0.7 V16.2 L4.1 12.8 L6.6 18.8 L9 17.8 L6.5 12 H11.6 Z" fill="#fff" stroke="#000" stroke-width="1"/>
</svg>
</div>
</body></html>
